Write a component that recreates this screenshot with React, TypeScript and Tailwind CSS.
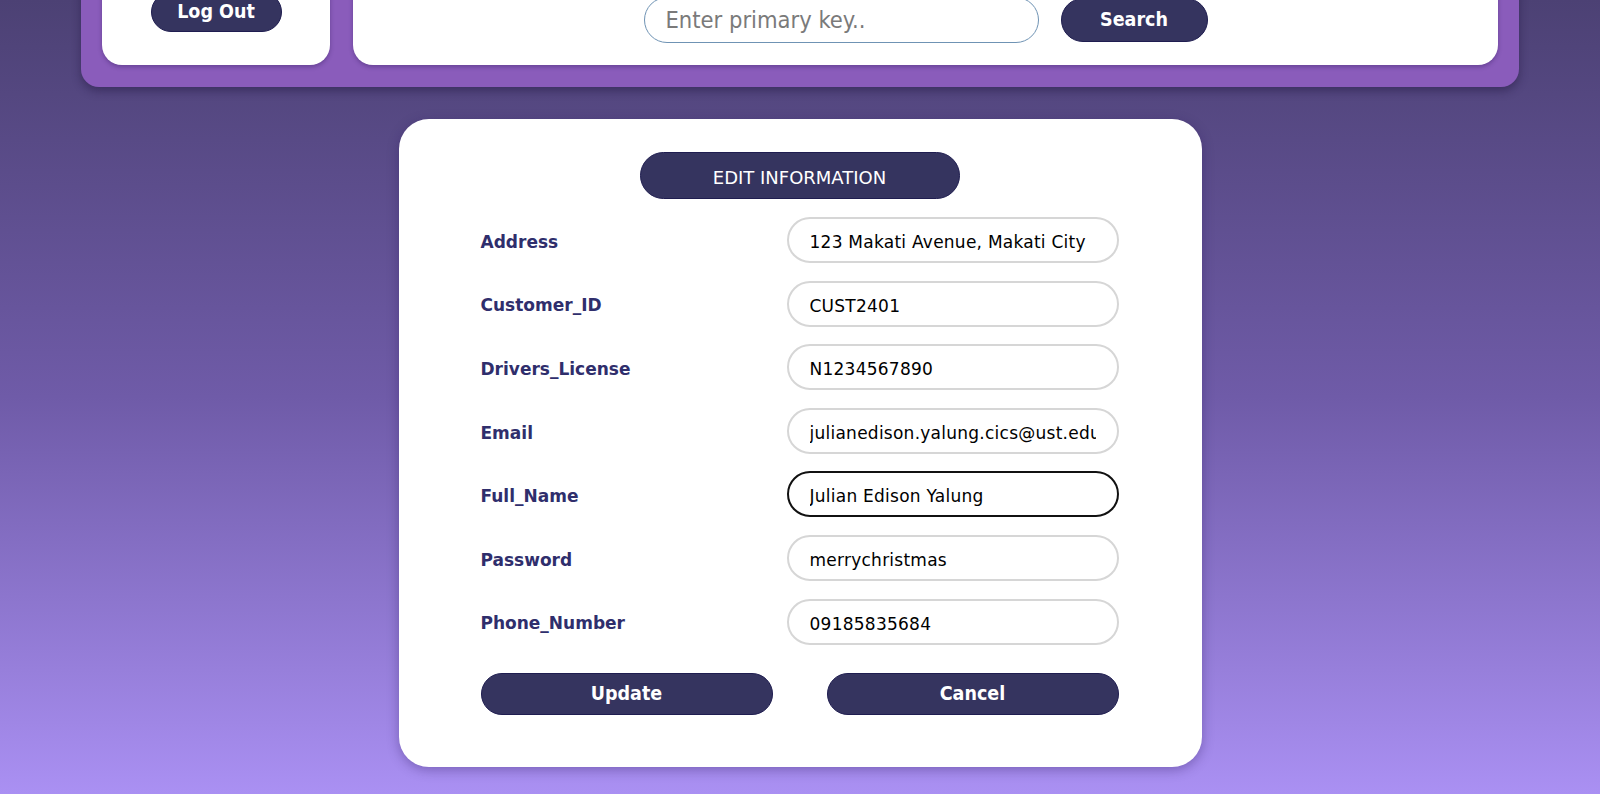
import React, { useEffect, useRef, useState } from 'react';

const fields = [
  { name: 'Address', value: '123 Makati Avenue, Makati City' },
  { name: 'Customer_ID', value: 'CUST2401' },
  { name: 'Drivers_License', value: 'N1234567890' },
  { name: 'Email', value: 'julianedison.yalung.cics@ust.edu.ph' },
  { name: 'Full_Name', value: 'Julian Edison Yalung' },
  { name: 'Password', value: 'merrychristmas' },
  { name: 'Phone_Number', value: '09185835684' },
];

function Header() {
  const [key, setKey] = useState('');

  return (
    <div className="mx-auto -mt-[80px] flex w-[1438px] gap-[23px] rounded-[18px] bg-[#8a5cbb] px-[21px] pt-[21px] pb-[22px] shadow-[0_4px_10px_rgba(30,20,60,0.45)]">
      <div className="flex h-[124px] w-[228px] flex-col items-center justify-end rounded-[20px] bg-white pb-[33px] shadow-[0_2px_4px_rgba(40,20,80,0.35)]">
        <button className="h-[40px] w-[131px] rounded-full border border-[#1f1d50] bg-[#35345f] text-[19.5px] font-bold text-white font-['DejaVu_Sans_Condensed','DejaVu_Sans',sans-serif]">
          Log Out
        </button>
      </div>
      <div className="flex flex-1 items-end justify-center gap-[22px] rounded-[20px] bg-white pb-[22px] shadow-[0_2px_4px_rgba(40,20,80,0.35)]">
        <input
          value={key}
          onChange={(e) => setKey(e.target.value)}
          placeholder="Enter primary key.."
          className="h-[46px] w-[395px] rounded-full border border-[#6f93b4] px-[21px] text-[23.5px] text-black outline-none placeholder:text-[#7a7a7a] font-['DejaVu_Sans_Condensed','DejaVu_Sans',sans-serif]"
        />
        <button className="mb-[1px] h-[44px] w-[147px] rounded-full border border-[#1f1d50] bg-[#35345f] text-[19.5px] font-bold text-white font-['DejaVu_Sans_Condensed','DejaVu_Sans',sans-serif]">
          Search
        </button>
      </div>
    </div>
  );
}

function EditCard() {
  const [values, setValues] = useState<Record<string, string>>(
    Object.fromEntries(fields.map((f) => [f.name, f.value]))
  );
  const nameRef = useRef<HTMLInputElement>(null);

  // the Full_Name field is being edited, caret at the end
  useEffect(() => {
    const el = nameRef.current;
    if (el) {
      el.focus();
      el.setSelectionRange(el.value.length, el.value.length);
    }
  }, []);

  return (
    <div className="mx-auto mt-[32px] w-[803px] rounded-[30px] bg-white pt-[33px] pr-[83px] pb-[52px] pl-[82px] shadow-[0_3px_12px_rgba(40,20,90,0.35)]">
      <div className="mx-auto flex h-[47px] w-[320px] items-center justify-center rounded-full border border-[#1f1d50] bg-[#35345f] pt-[3px] text-[18px] text-white font-['DejaVu_Sans',sans-serif]">
        EDIT INFORMATION
      </div>

      <div className="mt-[18px] flex flex-col gap-[17.6px]">
        {fields.map((f) => (
          <div key={f.name} className="flex items-center justify-between">
            <label className="pt-[5px] text-[17px] font-bold text-[#2f2e6c] font-['DejaVu_Sans',sans-serif]">
              {f.name}
            </label>
            <input
              ref={f.name === 'Full_Name' ? nameRef : undefined}
              value={values[f.name]}
              onChange={(e) => setValues({ ...values, [f.name]: e.target.value })}
              className={`h-[46px] w-[332px] rounded-full border-2 pt-[4px] pl-[21px] pr-[21px] text-[17px] tracking-[0.25px] text-black caret-black outline-none font-['DejaVu_Sans',sans-serif] ${
                f.name === 'Full_Name' ? 'border-[#111]' : 'border-[#d6d6d6]'
              }`}
            />
          </div>
        ))}
      </div>

      <div className="mt-[28px] flex justify-between">
        <button className="h-[42px] w-[292px] rounded-full border border-[#1f1d50] bg-[#35345f] text-[19.5px] font-bold text-white font-['DejaVu_Sans_Condensed','DejaVu_Sans',sans-serif]">
          Update
        </button>
        <button className="h-[42px] w-[292px] rounded-full border border-[#1f1d50] bg-[#35345f] text-[19.5px] font-bold text-white font-['DejaVu_Sans_Condensed','DejaVu_Sans',sans-serif]">
          Cancel
        </button>
      </div>
    </div>
  );
}

export default function App() {
  return (
    <div className="h-[794px] overflow-hidden bg-gradient-to-b from-[#4c4174] via-[#6f5ba8] to-[#aa90f3]">
      <Header />
      <EditCard />
    </div>
  );
}
